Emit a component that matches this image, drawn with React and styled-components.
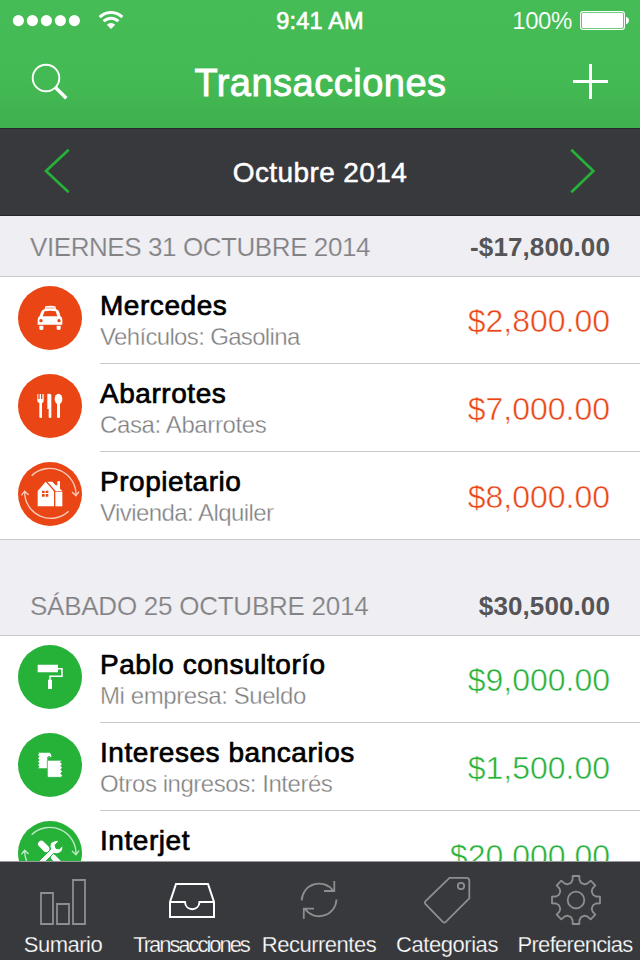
import React from "react";
import styled, { createGlobalStyle } from "styled-components";

const GREEN = "#26b139";
const ORANGE = "#e94515";
const LINE = "#c8c7cc";

const Global = createGlobalStyle`
  * { box-sizing: border-box; }
  body { margin: 0; background: #fff; font-family: "Liberation Sans", Arial, sans-serif; }
  svg { display: block; flex: none; }
  button { border: 0; padding: 0; background: none; font: inherit; color: inherit; }
`;

const Screen = styled.div`
  width: 640px;
  height: 960px;
  display: flex;
  flex-direction: column;
  overflow: hidden;
  background: #fff;
`;

const TopArea = styled.header`
  flex: none;
  height: 128px;
  color: #fff;
  background: linear-gradient(#45bc56 0, #44ba54 80px, #3eb04d 128px);
`;

const StatusBar = styled.div`
  height: 40px;
  display: grid;
  grid-template-columns: 1fr auto 1fr;
  align-items: center;
  padding: 1px 11px 0 12px;
`;

const Signal = styled.div`
  display: flex;
  align-items: center;
  gap: 17px;
`;

const Clock = styled.span`
  font-size: 23.5px;
  line-height: 28px;
  letter-spacing: 0.2px;
  margin-left: -1px;
  -webkit-text-stroke: 0.7px #fff;
`;

const Charge = styled.div`
  display: flex;
  justify-content: flex-end;
  align-items: center;
  gap: 8px;
  font-size: 24px;
  line-height: 28px;
  letter-spacing: -0.4px;
  -webkit-text-stroke: 0.15px #44ba54;
`;

const NavBar = styled.div`
  height: 88px;
  display: flex;
  align-items: flex-start;
  justify-content: space-between;
  padding: 22px 30px 0;
`;

const NavButton = styled.button`
  padding-top: ${(p) => p.$top}px;
`;

const Title = styled.h1`
  margin: -1px 0 0 -2px;
  font-size: 38px;
  line-height: 44px;
  font-weight: 400;
  letter-spacing: 0.5px;
  -webkit-text-stroke: 0.9px #fff;
`;

const MonthBar = styled.div`
  flex: none;
  height: 88px;
  display: flex;
  align-items: center;
  justify-content: space-between;
  padding: 0 43px 2px;
  background: #38393c;
  border-top: 1px solid #252628;
  border-bottom: 1px solid #252628;
`;

const Month = styled.span`
  color: #fff;
  font-size: 28px;
  line-height: 32px;
  letter-spacing: 0.4px;
  padding-top: 3px;
  -webkit-text-stroke: 0.5px #fff;
`;

const List = styled.main`
  flex: 1;
  min-height: 0;
  overflow: hidden;
`;

const DayHeader = styled.div`
  height: ${(p) => p.$height}px;
  display: flex;
  align-items: flex-end;
  justify-content: space-between;
  padding: 0 30px 14px;
  background: #efeef3;
  border-bottom: 1px solid ${LINE};
  font-size: 26px;
  line-height: 30px;
`;

const DayName = styled.span`
  color: #828284;
  letter-spacing: ${(p) => p.$track}px;
  -webkit-text-stroke: 0.2px #efeef3;
`;

const DayTotal = styled.span`
  color: #555557;
  font-weight: 700;
  letter-spacing: 0.1px;
`;

const Row = styled.div`
  height: 88px;
  display: flex;
  background: #fff;
  &:first-child { height: 87px; }
  &:last-child { border-bottom: 1px solid ${LINE}; }
`;

const IconCell = styled.div`
  flex: none;
  width: 100px;
  display: flex;
  align-items: flex-end;
  padding: 0 0 14px 18px;
  ${Row}:last-child & { padding-bottom: 13px; }
`;

const Badge = styled.div`
  width: 64px;
  height: 64px;
  border-radius: 50%;
  background: ${(p) => p.$color};
`;

const RowBody = styled.div`
  flex: 1;
  display: flex;
  align-items: flex-start;
  justify-content: space-between;
  padding-right: 30px;
  border-bottom: 1px solid ${LINE};
  padding-top: 14px;
  ${Row}:first-child & { padding-top: 13px; }
  ${Row}:last-child & { border-bottom: 0; }
`;

const Labels = styled.div`
  display: flex;
  flex-direction: column;
  white-space: nowrap;
`;

const Name = styled.span`
  font-size: 28px;
  line-height: 32px;
  letter-spacing: 0.55px;
  color: #000;
  -webkit-text-stroke: 0.7px #000;
`;

const Category = styled.span`
  font-size: 24px;
  line-height: 30px;
  letter-spacing: ${(p) => p.$track}px;
  color: #7e7e80;
  -webkit-text-stroke: 0.35px #fff;
`;

const Amount = styled.span`
  font-size: 32px;
  line-height: 36px;
  margin-top: 13px;
  color: ${(p) => p.$color};
  -webkit-text-stroke: 0.5px #fff;
`;

const Tabs = styled.nav`
  flex: none;
  height: 99px;
  display: grid;
  grid-template-columns: repeat(5, 128px);
  background: #38393c;
  border-top: 1px solid #98999b;
`;

const Tab = styled.button`
  display: flex;
  flex-direction: column;
  align-items: center;
  color: ${(p) => (p.$active ? "#fff" : "#8d8e8f")};
`;

const TabLabel = styled.span`
  margin: 6px 0 0 -2px;
  font-size: 22px;
  line-height: 26px;
  letter-spacing: ${(p) => p.$track}px;
  white-space: nowrap;
  color: #fff;
  -webkit-text-stroke: 0.25px #38393c;
`;

const SignalDots = () => (
  <svg width="69" height="14" viewBox="0 0 69 14" fill="#fff">
    {[0, 1, 2, 3, 4].map((i) => <circle key={i} cx={6.4 + i * 14} cy="6.6" r="5.6" />)}
  </svg>
);

const Wifi = () => (
  <svg width="26" height="20" viewBox="0 0 26 20" fill="none" stroke="#fff">
    <path d="M1.7 6.2A16 16 0 0 1 24.3 6.2" strokeWidth="3.1" />
    <path d="M5.6 10.3A10.4 10.4 0 0 1 20.4 10.3" strokeWidth="2.9" />
    <path d="M8.8 13.8A6 6 0 0 1 17.2 13.8L13 18Z" fill="#fff" stroke="none" />
  </svg>
);

const Battery = () => (
  <svg width="49" height="20" viewBox="0 0 49 20">
    <rect x="0.6" y="0.6" width="43.8" height="17.8" rx="2.5" fill="none" stroke="#fff" strokeWidth="1.1" />
    <rect x="2" y="2" width="41" height="15" rx="1.2" fill="#fff" />
    <path d="M46 6h.6Q49 6.8 49 9.5T46.6 13H46z" fill="#fff" />
  </svg>
);

const Search = () => (
  <svg width="40" height="40" viewBox="30 62 40 40" fill="none" stroke="#fff">
    <circle cx="46" cy="78" r="13.3" strokeWidth="1.9" />
    <path d="M55 87L66.3 98.3" strokeWidth="3.4" />
  </svg>
);

const Plus = () => (
  <svg width="37" height="37" viewBox="0 0 37 37" stroke="#fff" strokeWidth="3">
    <path d="M0 18.5h35M17.5 1v35" />
  </svg>
);

const Chevron = ({ right }) => (
  <svg width="28" height="48" viewBox="0 0 28 48" fill="none" stroke={GREEN} strokeWidth="2.7">
    <path d={right ? "M2.3 2.7L24.3 24L2.3 45.3" : "M25.7 2.7L3 24L25.7 45.3"} />
  </svg>
);

const RepeatRing = () => (
  <g fill="none" stroke="#fff" strokeOpacity="0.72" strokeWidth="4">
    <path d="M41 41A78.5 78.5 0 0 1 174 100M162 90L174 101L183 89" />
    <path d="M152 148A78.5 78.5 0 0 1 20 90M10 100L20 88L32 99" />
  </g>
);

const glyphs = {
  taxi: (c) => (
    <>
      <path d="M80 69L82 61Q97 57 112 61L114 69Q122 71 124 79L127 90Q133 93 133 101V116H59V101Q59 93 65 90L69 79Q71 71 80 69Z" />
      <path d="M84 66H110" stroke={c} strokeOpacity="0.4" strokeWidth="4" />
      <path d="M80 76Q97 73 113 76L118 91H74Z" fill={c} />
      <circle cx="69" cy="104" r="5" fill={c} />
      <circle cx="123" cy="104" r="5" fill={c} />
      <path d="M64 119H76V128Q76 132 70 132T64 128ZM116 119H128V128Q128 132 122 132T116 128Z" />
    </>
  ),
  cutlery: () => (
    <>
      <path d="M58 60h3v15h4V60h4v15h4V60h4v20q0 6-5 7v42q0 3-4 3t-4-3V87q-6-1-6-7z" />
      <path d="M88 60Q98 58 100 63V129Q100 132 96 132T92 129V105H88Z" />
      <ellipse cx="121.5" cy="75" rx="11.5" ry="15.5" />
      <path d="M117 87h9v42q0 3-4.500 3t-4.500-3z" />
    </>
  ),
  house: (c) => (
    <>
      <path d="M59 133V87L83 59L108 88V133Z" />
      <path d="M88 59H103L113 70H118V58H126V80L133 87H113Z" />
      <path d="M112 89H133V133H112Z" />
      <path d="M72 86h8v7h-8zM83 86h8v7h-8zM72 96h8v8h-8zM83 96h8v8h-8z" fill={c} />
    </>
  ),
  roller: () => (
    <>
      <path d="M59 59H120V82H59ZM90 104H102V132H90Z" />
      <path d="M120 71H132V94H96V105" fill="none" stroke="#fff" strokeWidth="4.500" />
    </>
  ),
  tickets: (c) => (
    <>
      <path d="M60 59H95Q101 63 100 73H88V106H60L65 101L60 96L65 91L60 86L65 81L60 76L65 71L60 66L64 62Z" />
      <path d="M88 75L94 69L98 75" fill="none" stroke={c} strokeWidth="3" />
      <path d="M88 82H132L127 88L133 93L128 99L133 104L128 110L133 115L128 121L133 127L130 133H91Q88 133 88 129Z" stroke={c} strokeWidth="2" />
    </>
  ),
  tools: (c) => (
    <>
      <path d="M70 69L84 83" stroke="#fff" strokeWidth="20" strokeLinecap="round" />
      <path d="M84 83L126 125" stroke="#fff" strokeWidth="9" />
      <path d="M107 110L126 129" stroke="#fff" strokeWidth="16" strokeLinecap="round" />
      <path d="M57 126L98 85Q91 65 108 60Q116 57 123 60L111 72L114 82L124 84L134 73Q137 91 122 97Q114 100 107 97L72 132Z" stroke={c} strokeWidth="3" />
    </>
  ),
};

const CategoryIcon = ({ kind, color, repeat }) => (
  <Badge $color={color}>
    <svg width="64" height="64" viewBox="0 0 192 192" fill="#fff">
      {repeat && <RepeatRing />}
      {glyphs[kind](color)}
    </svg>
  </Badge>
);

const gearPoints = Array.from({ length: 8 }, (_, i) => {
  const a = (i * Math.PI) / 4;
  return [[-5, -17.2], [-3.5, -20], [-3.3, -24], [3.3, -24], [3.5, -20], [5, -17.2]]
    .map(([x, y]) => `${(64 + x * Math.cos(a) - y * Math.sin(a)).toFixed(2)},${(38 + x * Math.sin(a) + y * Math.cos(a)).toFixed(2)}`)
    .join(" ");
}).join(" ");

const tabGlyphs = {
  bars: <path d="M41 31h12v31H41zM57 42h12v20H57zM73 18h12v44H73z" />,
  tray: <path d="M42 40L48 22H80L86 40V55H42ZM42 40H57C57.500 49.500 71 49.500 71.500 40H86" strokeWidth="2" />,
  cycle: <path d="M45.700 38.500A17.400 17.400 0 0 1 77 28.500M78.300 19V29H68M80.500 37.500A17.400 17.400 0 0 1 49 47M47.800 56.700V46.700H58" />,
  tag: (
    <>
      <path d="M65.500 15.800H82.500Q85.300 15.800 85.300 18.600V36.300L61.800 59.800Q60.300 61.200 58.800 59.800L41.300 41.800Q40.200 40.500 41.300 39.300Z" />
      <circle cx="77" cy="24" r="3.200" />
    </>
  ),
  gear: (
    <>
      <polygon points={gearPoints} strokeLinejoin="round" />
      <circle cx="64" cy="38" r="8.300" />
    </>
  ),
};

const days = [
  {
    name: "VIERNES 31 OCTUBRE 2014", total: "-$17,800.00", height: 61, track: -0.42, color: ORANGE,
    rows: [
      { kind: "taxi", name: "Mercedes", category: "Vehículos: Gasolina", track: -0.66, amount: "$2,800.00" },
      { kind: "cutlery", name: "Abarrotes", category: "Casa: Abarrotes", track: -0.38, amount: "$7,000.00" },
      { kind: "house", repeat: true, name: "Propietario", category: "Vivienda: Alquiler", track: -0.57, amount: "$8,000.00" },
    ],
  },
  {
    name: "SÁBADO 25 OCTUBRE 2014", total: "$30,500.00", height: 96, track: -0.25, color: GREEN,
    rows: [
      { kind: "roller", name: "Pablo consultorío", category: "Mi empresa: Sueldo", track: -0.42, amount: "$9,000.00" },
      { kind: "tickets", name: "Intereses bancarios", category: "Otros ingresos: Interés", track: -0.45, amount: "$1,500.00" },
      { kind: "tools", repeat: true, name: "Interjet", amount: "$20,000.00" },
    ],
  },
];

const tabs = [
  { label: "Sumario", glyph: "bars", track: -0.5 },
  { label: "Transacciones", glyph: "tray", track: -2.05, active: true },
  { label: "Recurrentes", glyph: "cycle", track: -0.5 },
  { label: "Categorias", glyph: "tag", track: -0.45 },
  { label: "Preferencias", glyph: "gear", track: -0.72 },
];

export default function App() {
  return (
    <Screen>
      <Global />
      <TopArea>
        <StatusBar>
          <Signal><SignalDots /><Wifi /></Signal>
          <Clock>9:41 AM</Clock>
          <Charge><span>100%</span><Battery /></Charge>
        </StatusBar>
        <NavBar>
          <NavButton $top={0} aria-label="Buscar"><Search /></NavButton>
          <Title>Transacciones</Title>
          <NavButton $top={1} aria-label="Agregar"><Plus /></NavButton>
        </NavBar>
      </TopArea>
      <MonthBar>
        <button aria-label="Mes anterior"><Chevron /></button>
        <Month>Octubre 2014</Month>
        <button aria-label="Mes siguiente"><Chevron right /></button>
      </MonthBar>
      <List>
        {days.map((day) => (
          <section key={day.name}>
            <DayHeader $height={day.height}>
              <DayName $track={day.track}>{day.name}</DayName>
              <DayTotal>{day.total}</DayTotal>
            </DayHeader>
            <div>
              {day.rows.map((row) => (
                <Row key={row.name}>
                  <IconCell><CategoryIcon kind={row.kind} color={day.color} repeat={row.repeat} /></IconCell>
                  <RowBody>
                    <Labels>
                      <Name>{row.name}</Name>
                      {row.category && <Category $track={row.track}>{row.category}</Category>}
                    </Labels>
                    <Amount $color={day.color}>{row.amount}</Amount>
                  </RowBody>
                </Row>
              ))}
            </div>
          </section>
        ))}
      </List>
      <Tabs>
        {tabs.map((tab) => (
          <Tab key={tab.label} $active={tab.active}>
            <svg width="128" height="64" viewBox="0 0 128 64" fill="none" stroke="currentColor" strokeWidth="1.8">
              {tabGlyphs[tab.glyph]}
            </svg>
            <TabLabel $track={tab.track}>{tab.label}</TabLabel>
          </Tab>
        ))}
      </Tabs>
    </Screen>
  );
}
